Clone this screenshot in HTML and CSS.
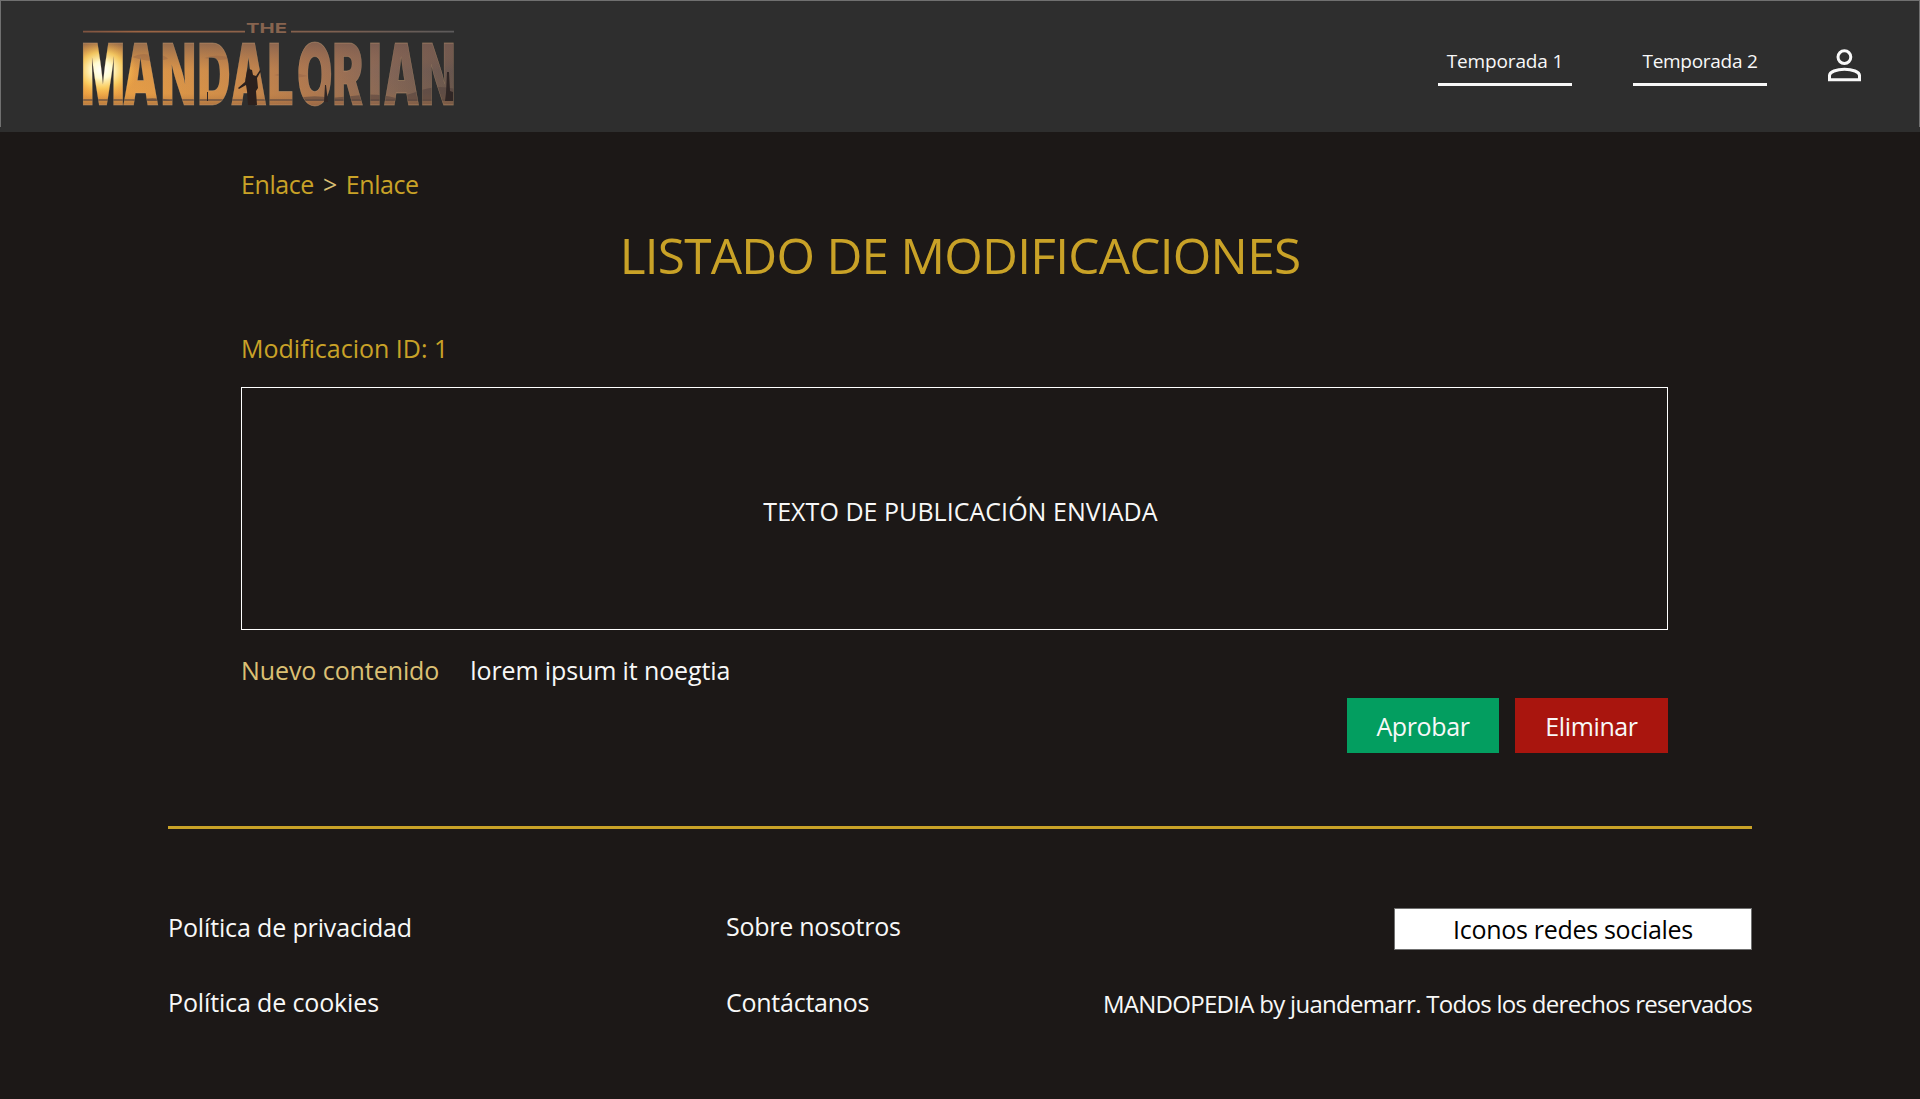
FILE: index.html
```html
<!DOCTYPE html>
<html lang="es">
<head>
<meta charset="utf-8">
<title>Mandopedia - Listado de modificaciones</title>
<link rel="stylesheet" href="styles.css">
</head>
<body>
<header class="header">
  <a class="logo">
    <svg width="374" height="110" viewBox="0 0 374 110" role="img" aria-label="The Mandalorian">
      <defs>
        <linearGradient id="sky" x1="0" y1="0" x2="1" y2="0">
          <stop offset="0" stop-color="#f0a040"/>
          <stop offset=".12" stop-color="#eda347"/>
          <stop offset=".4" stop-color="#cf8d4c"/>
          <stop offset=".58" stop-color="#ae7852"/>
          <stop offset=".76" stop-color="#80655a"/>
          <stop offset="1" stop-color="#504a4b"/>
        </linearGradient>
        <linearGradient id="dusk" x1="0" y1="0" x2="0" y2="1">
          <stop offset="0" stop-color="#76594f" stop-opacity=".75"/>
          <stop offset=".45" stop-color="#a06d4c" stop-opacity=".15"/>
          <stop offset=".8" stop-color="#c0803c" stop-opacity=".15"/>
          <stop offset="1" stop-color="#8a5b3c" stop-opacity=".6"/>
        </linearGradient>
        <radialGradient id="sun">
          <stop offset="0" stop-color="#fff"/>
          <stop offset=".28" stop-color="#fffbd0"/>
          <stop offset=".6" stop-color="#ffd766" stop-opacity=".8"/>
          <stop offset="1" stop-color="#f7a83e" stop-opacity="0"/>
        </radialGradient>
        <linearGradient id="rule" gradientUnits="userSpaceOnUse" x1="0" y1="0" x2="374" y2="0">
          <stop offset="0" stop-color="#7d5340"/>
          <stop offset=".15" stop-color="#9c6443"/>
          <stop offset=".65" stop-color="#80604f"/>
          <stop offset="1" stop-color="#5b5a5b"/>
        </linearGradient>
        <pattern id="scene" patternUnits="userSpaceOnUse" x="-4" y="0" width="400" height="110" patternTransform="scale(1.85185 1)">
          <g transform="translate(4 0)">
            <rect x="-4" width="400" height="110" fill="url(#sky)"/>
            <rect x="-4" y="22" width="400" height="64" fill="url(#dusk)"/>
            <ellipse cx="20" cy="50" rx="36" ry="30" fill="url(#sun)"/>
            <path d="M50 37q12-6 24 0q8-4 12 2q-16 5-36-2M122 38q12-5 28 0q-12 4-28 0M192 55q16-5 34 1q-16 4-34-1" fill="#8c5b43" opacity=".35"/>
            <path d="M50 81q20-6 42 0zM210 79q22-5 38-1l22-2q24-4 44 2l20-6q20-8 40-3v12H210z" fill="#4d3d3c" opacity=".5"/>
            <rect x="-4" y="79" width="400" height="2" fill="#5c4740" opacity=".6"/>
          </g>
        </pattern>
      </defs>
      <path d="M1 11.7H163M209 11.7H372" stroke="url(#rule)" stroke-width="1.8"/>
      <text class="logo-the" x="164" y="12.5" textLength="41" lengthAdjust="spacingAndGlyphs">THE</text>
      <text class="logo-name" transform="scale(.54 1)" y="85" x="-2 75 146 213.7 275 343.3 398 463.7 530.3 558 626.6">MANDALORIAN</text>
      <!-- hunter standing in the middle letter, posts on the horizon -->
      <path d="M165 51l2-2 3 1 1 5 3 1 4-6 1 1-4 7 1 10-2 3 1 14h-9l-1-14-1-6-7 4-1-1 7-6 1-6z" fill="#2b201d"/>
      <path d="M125 81v-9h1v9zM242 82l1-17h1l2 17zM363 81l1-8 1-21h2l1 19 3 1v9z" fill="#302625"/>
    </svg>
  </a>
  <nav class="nav">
    <a class="nav-link">Temporada 1</a>
    <a class="nav-link nav-link-second">Temporada 2</a>
  </nav>
  <a class="user">
    <svg width="33" height="33" viewBox="0 0 33 33" fill="none" stroke="#f8f8f8" stroke-width="3">
      <circle cx="16.4" cy="8.1" r="6.4"/>
      <path d="M1.5 30.8v-4.3c0-3.6 7-6.3 15-6.3s15 2.7 15 6.3v4.3z"/>
    </svg>
  </a>
</header>

<main class="main">
  <div class="breadcrumb"><a>Enlace</a><span class="separator">&gt;</span><a>Enlace</a></div>
  <h1 class="title">LISTADO DE MODIFICACIONES</h1>
  <h2 class="subtitle">Modificacion ID: 1</h2>
  <div class="publication">TEXTO DE PUBLICACIÓN ENVIADA</div>
  <div class="content-row">
    <span class="content-label">Nuevo contenido</span>
    <span class="content-text">lorem ipsum it noegtia</span>
  </div>
  <div class="actions">
    <button class="button approve">Aprobar</button>
    <button class="button delete">Eliminar</button>
  </div>
</main>

<footer class="footer">
  <div class="column policies">
    <a>Política de privacidad</a>
    <a>Política de cookies</a>
  </div>
  <div class="column about">
    <a>Sobre nosotros</a>
    <a>Contáctanos</a>
  </div>
  <div class="column legal">
    <div class="social">Iconos redes sociales</div>
    <div class="copyright">MANDOPEDIA by juandemarr. Todos los derechos reservados</div>
  </div>
</footer>
</body>
</html>
```
FILE: styles.css
```css
* {
  box-sizing: border-box;
}

body {
  margin: 0;
  min-height: 1099px;
  background: #1c1817;
  color: #f8f8f8;
  font: 25px/34px "Open Sans", "Noto Sans", sans-serif;
}

/* Header */
.header {
  position: relative;
  display: flex;
  align-items: flex-start;
  height: 132px;
  padding: 0 59px 0 82px;
  background: #2e2e2e;
}

.header::after {
  content: "";
  position: absolute;
  inset: 0 0 5px;
  border: 1px solid #707070;
  border-bottom: 0;
}

.logo {
  margin-top: 20px;
}

.logo svg,
.user svg {
  display: block;
  overflow: visible;
}

.logo-the {
  font: 700 13.5px Inter, sans-serif;
  fill: #87644f;
}

.logo-name {
  font: 900 85px Inter, sans-serif;
  fill: url(#scene);
  stroke: #d8ad7c;
  stroke-opacity: .4;
  stroke-width: .8px;
}

.nav {
  display: flex;
  gap: 61px;
  margin: 48px 61px 0 auto;
}

.nav-link {
  width: 134px;
  padding-bottom: 9px;
  border-bottom: 3px solid #f8f8f8;
  font-size: 19px;
  line-height: 26px;
  letter-spacing: -.15px;
  text-align: center;
}

.nav-link-second {
  letter-spacing: -.28px;
}

.user {
  margin-top: 49px;
}

/* Main content */
.main {
  width: 1427px;
  margin-left: 241px;
  padding-top: 35px;
}

.breadcrumb {
  display: flex;
  color: #c9a227;
  letter-spacing: -.42px;
}

.separator {
  margin: 0 9px;
  color: #dbc074;
}

.title {
  margin: 20px 0 42px;
  padding-left: 11px;
  color: #c9a227;
  font-size: 49.5px;
  font-weight: 400;
  line-height: 68px;
  letter-spacing: -.73px;
  text-align: center;
}

.subtitle {
  margin: 0 0 22px;
  color: #c9a227;
  font-size: 25px;
  font-weight: 400;
}

.publication {
  display: flex;
  align-items: center;
  justify-content: center;
  height: 243px;
  padding: 5px 0 0 12px;
  border: 1px solid #fff;
  letter-spacing: .04px;
}

.content-row {
  display: flex;
  gap: 31px;
  margin: 23px 0 11px;
}

.content-label {
  color: #dbc074;
  letter-spacing: -.08px;
}

.content-text {
  letter-spacing: -.12px;
}

.actions {
  display: flex;
  justify-content: flex-end;
  gap: 16px;
}

.button {
  width: 152px;
  height: 55px;
  padding: 1px 0 0;
  border: 0;
  color: #f8f8f8;
  font: inherit;
  letter-spacing: -.38px;
}

.approve {
  background: #039e60;
}

.delete {
  width: 153px;
  background: #a9150e;
}

/* Footer */
.footer {
  display: grid;
  grid-template-columns: 558px 300px 1fr;
  width: 1584px;
  margin: 73px 0 0 168px;
  border-top: 3px solid #c9a227;
}

.column {
  display: flex;
  flex-direction: column;
}

.policies {
  gap: 41px;
  padding-top: 81px;
  letter-spacing: -.14px;
}

.about {
  gap: 42px;
  padding-top: 80px;
  letter-spacing: -.25px;
}

.legal {
  gap: 37px;
  align-items: flex-end;
  padding-top: 79px;
}

.social {
  width: 358px;
  height: 42px;
  padding-top: 3px;
  border: 1px solid #707070;
  background: #fff;
  color: #000;
  letter-spacing: -.3px;
  text-align: center;
}

.copyright {
  font-size: 24px;
  line-height: 33px;
  letter-spacing: -.71px;
  white-space: nowrap;
}
```
